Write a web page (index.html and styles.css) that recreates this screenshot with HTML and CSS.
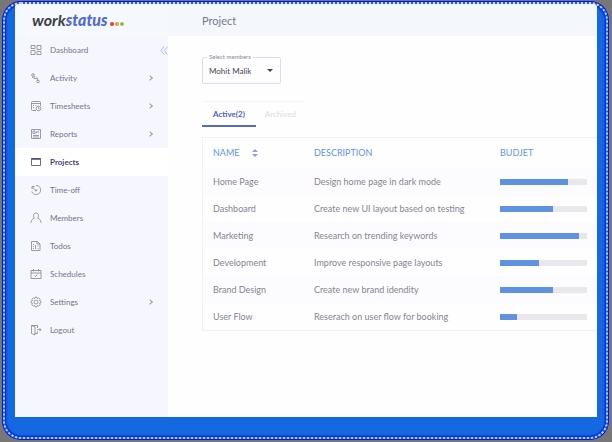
FILE: index.html
```html
<!DOCTYPE html>
<html lang="en">
<head>
<meta charset="utf-8">
<title>Workstatus - Project</title>
<link rel="stylesheet" href="styles.css">
</head>
<body>
<div class="bezel">
  <div class="screen">
    <aside class="sidebar">
      <a class="logo" href="#"><span>work<b>status</b></span><i class="dot red"></i><i class="dot orange"></i><i class="dot green"></i></a>
      <nav class="nav">
        <a href="#"><svg viewBox="0 0 12 12"><path d="M1 1.500h4v3H1zM1 6.500h4v4H1zM7 1.500h4v4H7zM7 7.500h4v3H7z"/></svg><span>Dashboard</span></a>
        <a href="#"><svg viewBox="0 0 12 12"><circle cx="3" cy="3" r="1.300"/><path d="M4 4v2.500h3.500V9"/><circle cx="8" cy="9.500" r="1.300"/><path d="M2 5l1 1M6 4.500l1 1"/></svg><span>Activity</span><em class="chev"></em></a>
        <a href="#"><svg viewBox="0 0 12 12"><path d="M10.500 6V2.500q0-1-1-1h-7q-1 0-1 1v7q0 1 1 1H6M1.500 3.500h9M3 5.500h1M3 7.500h1M5.500 5.500h1"/><circle cx="8.500" cy="8.500" r="2.300"/><path d="M8.500 7.300v1.400h1"/></svg><span>Timesheets</span><em class="chev"></em></a>
        <a href="#"><svg viewBox="0 0 12 12"><path d="M1.500 1.500h9v9h-9zM3 9h6M3 7.500h6M3 3h2v2.500H3zM6 5.500l1-2 1 1 1-2"/></svg><span>Reports</span><em class="chev"></em></a>
        <a class="current" href="#" aria-current="page"><svg viewBox="0 0 12 12"><path d="M1.500 2.500h9v7h-9z"/><path d="M1.500 3h9" stroke-width="1.500"/></svg><span>Projects</span></a>
        <a href="#"><svg viewBox="0 0 12 12"><path d="M6 1.500A4.500 4.500 0 1 1 1.800 7.500M6 6.500L2.500 3M2 5V2.500h2.500"/><circle cx="6" cy="6.500" r=".7"/></svg><span>Time-off</span></a>
        <a href="#"><svg viewBox="0 0 12 12"><path d="M4.500 6.200C3 5 3 1 6 1s3 4 1.500 5.200M4.500 6.200C2 7 1 8.500 1 11M7.500 6.200C10 7 11 8.500 11 11"/></svg><span>Members</span></a>
        <a href="#"><svg viewBox="0 0 12 12"><path d="M1.500 1.500h6l2.500 2.500v6.500H1.500zM7 1.500V4h3M3 4.500h1M3 6.500h1M3 8.500h1M5.500 5v4M7.500 6h1M7.500 8.500h1"/></svg><span>Todos</span></a>
        <a href="#"><svg viewBox="0 0 12 12"><path d="M1 2.500h10v8H1zM1 5h10M3.500 1v2.500M8.500 1v2.500M4.500 7.500l1 1 2-2"/></svg><span>Schedules</span></a>
        <a href="#"><svg viewBox="0 0 12 12"><path d="M5 1.200h2l.4 1.300 1.300-.6 1.400 1.400-.6 1.300 1.300.4v2l-1.300.4.6 1.300-1.400 1.400-1.300-.6-.4 1.300H5l-.4-1.300-1.300.6-1.400-1.400.6-1.300L1.200 7V5l1.300-.4-.6-1.300 1.400-1.400 1.300.6z"/><circle cx="6" cy="6" r="2"/></svg><span>Settings</span><em class="chev"></em></a>
        <a href="#"><svg viewBox="0 0 12 12"><path d="M5 1.500h2.500V4M7.500 7.500v2H5M1.500 1.500v8l3.500 1.500V2.800L1.500 1.500H5M7 5.700h4M9.500 4.200L11 5.700 9.500 7.200"/></svg><span>Logout</span></a>
      </nav>
      <button class="collapse" type="button" aria-label="Collapse sidebar"><svg viewBox="0 0 8 8"><path d="M4 0L1 4l3 4M7.500 0l-3 4 3 4"/></svg></button>
    </aside>
    <main class="main">
      <header class="topbar"><h1>Project</h1></header>
      <div class="content">
        <div class="field">
          <label for="members">Select members</label>
          <select id="members"><option>Mohit Malik</option></select>
        </div>
        <div class="tabs">
          <button class="tab active" type="button">Active(2)</button>
          <button class="tab" type="button">Archived</button>
        </div>
        <table class="projects">
          <colgroup><col class="col-name"><col class="col-desc"><col></colgroup>
          <thead><tr>
            <th>NAME <svg class="sort" viewBox="0 0 6 8"><path d="M0 3l3-3 3 3zM0 5l3 3 3-3z"/></svg></th>
            <th>DESCRIPTION</th><th>BUDJET</th>
          </tr></thead>
          <tbody>
            <tr><td>Home Page</td><td>Design home page in dark mode</td><td><div class="bar"><div style="width:78%"></div></div></td></tr>
            <tr><td>Dashboard</td><td>Create new UI layout based on testing</td><td><div class="bar"><div style="width:61%"></div></div></td></tr>
            <tr><td>Marketing</td><td>Research on trending keywords</td><td><div class="bar"><div style="width:91%"></div></div></td></tr>
            <tr><td>Development</td><td>Improve responsive page layouts</td><td><div class="bar"><div style="width:45%"></div></div></td></tr>
            <tr><td>Brand Design</td><td>Create new brand idendity</td><td><div class="bar"><div style="width:61%"></div></div></td></tr>
            <tr><td>User Flow</td><td>Reserach on user flow for booking</td><td><div class="bar"><div style="width:20%"></div></div></td></tr>
          </tbody>
        </table>
      </div>
    </main>
  </div>
</div>
</body>
</html>
```
FILE: styles.css
```css
* { box-sizing: border-box; }
body {
  margin: 0;
  min-height: 100vh;
  padding: 2px 4px 3px 3px;
  display: flex;
  background: #777;
  font: 8px/12px Lato, "Liberation Sans", sans-serif;
  color: #85858f;
}
button, select { font: inherit; }
a { color: inherit; text-decoration: none; }

.bezel {
  flex: 1;
  display: flex;
  min-width: 0;
  padding: 0 9px 20px 10px;
  border: 2px dotted #a8dcff;
  border-top-color: #d0d4e8;
  border-radius: 18px;
  background: #1468e0 border-box;
  box-shadow: inset 0 0 2px 1px #0a10e8, 0 0 0 1px #0a10e8;
}
.screen {
  flex: 1;
  display: grid;
  grid-template-columns: 153px 1fr;
  min-width: 0;
  background: #fefeff;
  border-radius: 4px 4px 0 0;
}

.sidebar {
  position: relative;
  background: #f5f6fe;
  border-top-left-radius: 4px;
}
.logo {
  display: flex;
  align-items: center;
  height: 32px;
  padding-left: 17px;
  font-size: 16px;
  line-height: 20px;
  font-weight: 700;
  font-style: italic;
  color: #3b4045;
  background: #f5f8fc;
  border-top-left-radius: 4px;
}
.logo b { color: #526bd0; }
.dot {
  width: 4px;
  height: 4px;
  margin: 8px 1px 0 0;
  border-radius: 50%;
}
.dot.red { background: #dc3f31; margin-left: 2px; }
.dot.orange { background: #f39438; }
.dot.green { background: #8fbd4c; }

.nav a {
  display: flex;
  align-items: center;
  gap: 8px;
  height: 28px;
  padding: 0 16px 0 15px;
  color: #74748e;
}
.nav svg {
  width: 12px;
  height: 12px;
  fill: none;
  stroke: #83839b;
  stroke-width: .8;
}
.nav .current {
  background: #fff;
  color: #45427a;
  font-weight: 700;
}
.nav .current svg { stroke: #4b4970; }
.chev {
  width: 4px;
  height: 4px;
  margin-left: auto;
  border: solid #9a9ab0;
  border-width: 1px 1px 0 0;
  transform: rotate(45deg);
}
.collapse {
  position: absolute;
  top: 42px;
  right: 0;
  padding: 0;
  border: 0;
  background: none;
  line-height: 0;
}
.collapse svg {
  width: 8px;
  height: 9px;
  fill: none;
  stroke: #a9bdf5;
}

.topbar {
  display: flex;
  align-items: center;
  height: 32px;
  padding: 2px 34px 0;
  background: #f4f7fb;
  border-top-right-radius: 4px;
}
.topbar h1 {
  margin: 0;
  font-size: 11px;
  line-height: 14px;
  font-weight: 400;
  color: #77798f;
}
.content { padding: 21px 0 0 34px; }
.field {
  position: relative;
  width: 79px;
}
.field label {
  position: absolute;
  top: -5px;
  left: 5px;
  padding: 0 2px;
  background: #fefeff;
  font-size: 6px;
  line-height: 10px;
  color: #88889a;
}
.field select {
  display: block;
  width: 100%;
  height: 27px;
  padding: 0 6px;
  border: 1px solid #d9dcf2;
  border-radius: 2px;
  appearance: none;
  color: #45454d;
  background: #fefeff;
}
.field::after {
  content: "";
  position: absolute;
  top: 12px;
  right: 8px;
  border: 3px solid transparent;
  border-top-color: #45454d;
  border-bottom: 0;
}

.tabs {
  display: flex;
  margin-top: 17px;
}
.tab {
  height: 26px;
  padding: 0 9px;
  border: 0;
  border-top: 1px solid #f4f4fa;
  border-bottom: 2px solid transparent;
  background: none;
  color: #dcdce4;
}
.tab.active {
  padding: 0 11px;
  border-bottom-color: #526bc8;
  color: #4b5fc4;
  font-weight: 700;
}

.projects {
  width: 100%;
  margin-top: 10px;
  table-layout: fixed;
  border-collapse: separate;
  border-spacing: 0;
  border: 1px solid #f0f0f5;
  border-right: 0;
  font-size: 9px;
}
.col-name { width: 101px; }
.col-desc { width: 186px; }
.projects th, .projects td {
  height: 27px;
  padding: 0 10px;
  text-align: left;
  white-space: nowrap;
}
.projects th {
  height: 30px;
  font-weight: 400;
  color: #6194e4;
}
.projects tbody tr:nth-child(odd) { background: #fcfcfe; }
.sort {
  width: 6px;
  height: 8px;
  margin-left: 10px;
  vertical-align: -1px;
  fill: #8fa0dc;
}
.bar {
  height: 6px;
  background: #e8e8ec;
}
.bar div {
  height: 100%;
  background: #5f93e2;
}
```
